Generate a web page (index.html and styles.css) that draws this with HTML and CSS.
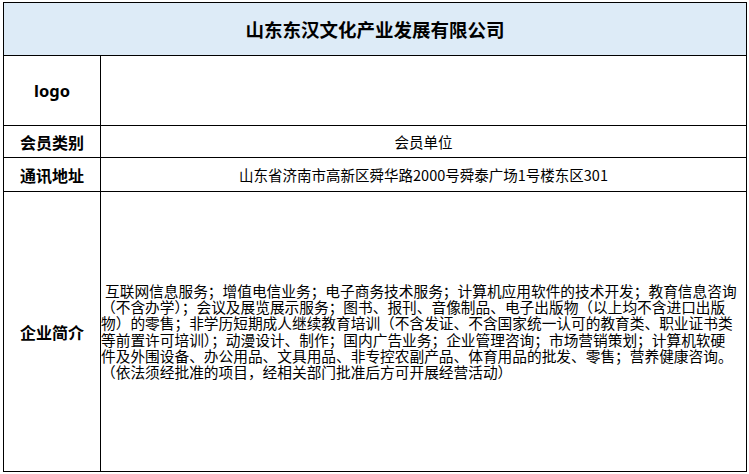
FILE: index.html
```html
<!DOCTYPE html>
<html lang="zh-CN">
<head>
<meta charset="utf-8">
<title>山东东汉文化产业发展有限公司</title>
<link rel="stylesheet" href="styles.css">
</head>
<body>
<table class="info">
  <colgroup>
    <col class="col-label">
    <col class="col-value">
  </colgroup>
  <tr class="row-title">
    <th colspan="2" class="title">山东东汉文化产业发展有限公司</th>
  </tr>
  <tr class="row-logo">
    <th class="label logo-label">logo</th>
    <td class="value"></td>
  </tr>
  <tr class="row-member">
    <th class="label">会员类别</th>
    <td class="value">会员单位</td>
  </tr>
  <tr class="row-address">
    <th class="label">通讯地址</th>
    <td class="value">山东省济南市高新区舜华路2000号舜泰广场1号楼东区301</td>
  </tr>
  <tr class="row-desc">
    <th class="label">企业简介</th>
    <td class="desc"><div class="line first">互联网信息服务；增值电信业务；电子商务技术服务；计算机应用软件的技术开发；教育信息咨询</div><div class="line">（不含办学）；会议及展览展示服务；图书、报刊、音像制品、电子出版物（以上均不含进口出版</div><div class="line">物）的零售；非学历短期成人继续教育培训（不含发证、不含国家统一认可的教育类、职业证书类</div><div class="line">等前置许可培训）；动漫设计、制作；国内广告业务；企业管理咨询；市场营销策划；计算机软硬</div><div class="line">件及外围设备、办公用品、文具用品、非专控农副产品、体育用品的批发、零售；营养健康咨询。</div><div class="line">（依法须经批准的项目，经相关部门批准后方可开展经营活动）</div></td>
  </tr>
</table>
</body>
</html>
```

FILE: styles.css
```css
html, body {
  margin: 0;
  padding: 0;
  background: #ffffff;
}

body {
  padding: 2px 0 0 3px;
  font-family: "Noto Sans CJK SC", "Noto Sans", sans-serif;
  color: #000000;
}

.info {
  border-collapse: collapse;
  table-layout: fixed;
  width: 744px;
}

.col-label {
  width: 97px;
}

.info th,
.info td {
  border: 1px solid #000000;
  padding: 0;
}

.title {
  background: #ddebf7;
  font-size: 18.5px;
  font-weight: 700;
  text-align: center;
  height: 52px;
  line-height: 20px;
  padding-bottom: 1px;
}

.label {
  font-size: 16px;
  font-weight: 700;
  text-align: center;
  vertical-align: middle;
}

.logo-label {
  font-family: "Noto Sans", "Noto Sans CJK SC", sans-serif;
  font-size: 16.5px;
  padding-bottom: 3px;
}

.row-logo th,
.row-logo td {
  height: 69px;
}

.row-member th,
.row-member td {
  height: 31px;
}

.row-address th,
.row-address td {
  height: 33px;
}

.row-desc th,
.row-desc td {
  height: 279px;
}

.value {
  font-size: 14.5px;
  text-align: center;
  vertical-align: middle;
  line-height: 18px;
}

.desc {
  font-size: 14.7px;
  vertical-align: middle;
  padding-left: 4px;
  padding-bottom: 12px;
}

.line {
  height: 16.2px;
  line-height: 16.2px;
  white-space: nowrap;
}

.first {
  padding-left: 4px;
}
```
